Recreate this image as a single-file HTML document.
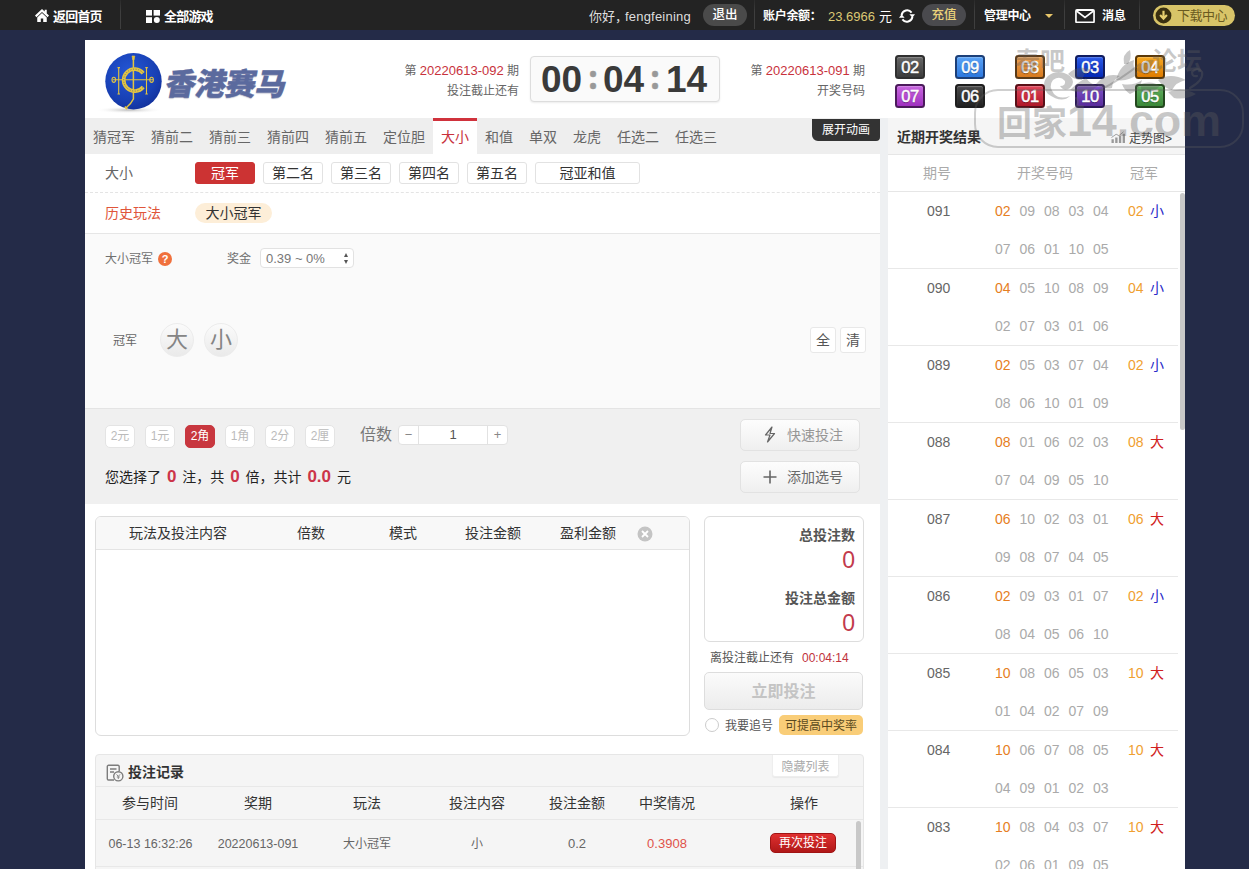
<!DOCTYPE html>
<html lang="zh-CN">
<head>
<meta charset="utf-8">
<title>香港赛马</title>
<style>
*{box-sizing:border-box;margin:0;padding:0}
html,body{width:1249px;height:869px;overflow:hidden}
body{background:#242b48;font-family:"Liberation Sans","Noto Sans CJK SC",sans-serif;font-size:12px;color:#666;position:relative}
.abs{position:absolute}
#topbar{position:absolute;left:0;top:0;width:1249px;height:29.5px;background:#232323;color:#fff;font-size:13px}
#topbar .t{position:absolute;top:1px;height:30px;line-height:31px;white-space:nowrap}
#topbar .sep{position:absolute;top:0;width:1px;height:29px;background:linear-gradient(#2a2a2a,#3e3e3e 40%,#3e3e3e)}
#wrap{position:absolute;left:85px;top:40px;width:1100px;height:829px;background:#fff}
/* header */
.hd-r{position:absolute;text-align:right;white-space:nowrap;font-size:12px;color:#666;line-height:20px}
.hd-r b{font-weight:normal;color:#c8323c}
#timer{position:absolute;left:445px;top:16px;width:190px;height:46px;border:1px solid #ddd;border-radius:4px;background:#fafafa;box-shadow:0 1px 2px rgba(0,0,0,.08)}
#timer span{position:absolute;top:1px;line-height:44px;font-size:37px;font-weight:bold;color:#3a3a3a;letter-spacing:0}
#timer i{position:absolute;font-family:'Noto Sans CJK SC',sans-serif;font-style:normal;top:-3px;line-height:44px;font-size:31px;-webkit-text-stroke:0.5px #999;font-weight:bold;color:#999}
.ball{position:absolute;width:30px;height:24px;border-radius:3.5px;border:2px solid #1c1c1c;color:#fff;font-size:16.5px;line-height:21.5px;box-shadow:inset 0 1px 1px rgba(255,255,255,.25);-webkit-text-stroke:0.45px #fff;text-align:center;letter-spacing:-0.5px;text-shadow:0 1px 1px rgba(0,0,0,.4)}
/* tabs */
#tabs{position:absolute;left:0;top:78px;width:795px;height:36px;background:#eee}
#tabs a{position:absolute;top:0;height:36px;line-height:39px;font-size:14px;color:#666;padding:0 8px;white-space:nowrap}
#tabs a.on{background:#fff;color:#c8323c;border-top:3px solid #d0323c;line-height:33px}
#anim{position:absolute;left:727px;top:79px;width:68px;height:22px;background:#333;color:#fff;font-size:12px;line-height:23px;text-align:center;border-radius:0 0 4px 6px}
/* left */
#left{position:absolute;left:0;top:114px;width:795px;height:715px;background:#fff}
.sbtn{position:absolute;top:8px;height:22px;width:60px;border:1px solid #e2e2e2;border-radius:3px;font-size:14px;line-height:20px;text-align:center;color:#333;background:#fff}
.sbtn.on{background:#cc3333;border-color:#cc3333;color:#fff}
.unit{position:absolute;top:270.5px;width:30px;height:23px;border:1px solid #e4e4e4;border-radius:5px;background:#fff;color:#bbb;font-size:12px;line-height:21px;text-align:center}
.unit.on{background:#c8373f;border-color:#c8373f;color:#fff}
.bigbtn{position:absolute;left:655px;width:120px;height:32px;border:1px solid #e2e2e2;border-radius:5px;background:linear-gradient(#fdfdfd,#efefef);font-size:14px;color:#969696;line-height:30px}
.rn{color:#cc3549;font-size:17px;margin:0 2px}
.th{transform:translateX(-50%);white-space:nowrap}
/* right */
#gap{position:absolute;left:795px;top:78px;width:8px;height:751px;background:#eef0f2}
#right{position:absolute;left:803px;top:78px;width:297px;height:751px;background:#fff;overflow:hidden}
.rrow{position:absolute;left:0;width:290px;height:77px;border-bottom:1px solid #e8e8e8;font-size:14px;color:#aaa}
.rrow span{position:absolute;line-height:20px;white-space:nowrap}
.rrow .p{left:39px;top:8.5px;color:#666}
.rrow .n{top:8.5px}
.rrow .n2{top:46.5px}
.o{color:#e67e22}.y{color:#f0a030}.bl{color:#2828c8}.rd{color:#d02020}
</style>
</head>
<body>
<div id="topbar">
  <svg class="abs" style="left:35px;top:9px" width="14" height="13" viewBox="0 0 15 13" preserveAspectRatio="none"><path d="M7.5 0 L0 6.5 L1.5 8.2 L7.5 3 L13.5 8.2 L15 6.5 L12.6 4.4 V0.8 H10.4 V2.5 Z" fill="#fff"/><path d="M7.5 4 L2.4 8.4 V13 H6.2 V9.4 H8.8 V13 H12.6 V8.4 Z" fill="#fff"/></svg>
  <span class="t" style="left:53px;font-weight:bold;letter-spacing:-0.8px">返回首页</span>
  <div class="sep" style="left:120px"></div>
  <svg class="abs" style="left:146px;top:10px" width="14" height="13" viewBox="0 0 14 13"><rect x="0" y="0" width="6" height="5.6" fill="#fff"/><rect x="7.6" y="0" width="6.4" height="5.6" fill="#fff"/><rect x="0" y="7.2" width="6" height="5.8" fill="#fff"/><circle cx="10.8" cy="10" r="3" fill="#fff"/></svg>
  <span class="t" style="left:164px;font-weight:bold;letter-spacing:-0.8px">全部游戏</span>
  <span class="t" style="left:589px;color:#ddd">你好，<span style="margin-left:-3px;letter-spacing:.2px">fengfeining</span></span>
  <span class="abs" style="left:703px;top:4px;width:44px;height:22px;border-radius:11px;background:#4a4a4a;color:#fff;font-size:12.5px;font-weight:500;line-height:23px;text-align:center">退出</span>
  <div class="sep" style="left:754px"></div>
  <span class="t" style="left:763px;font-weight:bold;font-size:12px;letter-spacing:-0.3px">账户余额：</span>
  <span class="t" style="left:828px;color:#dcc874">23.6966</span>
  <span class="t" style="left:879px">元</span>
  <svg class="abs" style="left:899px;top:8px" width="16" height="16" viewBox="0 0 16 16"><path d="M2.6 7.2 A5.6 5.6 0 0 1 12.6 4.6" fill="none" stroke="#fff" stroke-width="2"/><path d="M13.4 8.8 A5.6 5.6 0 0 1 3.4 11.4" fill="none" stroke="#fff" stroke-width="2"/><path d="M10.4 6.2 H16 L13.4 9.8 Z" fill="#fff"/><path d="M5.6 9.8 H0 L2.6 6.2 Z" fill="#fff"/></svg>
  <span class="abs" style="left:922px;top:4px;width:44px;height:22px;border-radius:11px;background:#4a4a4e;color:#ead27a;font-size:12.5px;font-weight:500;line-height:23px;text-align:center">充值</span>
  <div class="sep" style="left:974px"></div>
  <span class="t" style="left:984px;font-weight:bold;font-size:12px;letter-spacing:-0.3px">管理中心</span>
  <span class="abs" style="left:1045px;top:14px;width:0;height:0;border:4px solid transparent;border-top:4px solid #e8c66a"></span>
  <div class="sep" style="left:1064px"></div>
  <svg class="abs" style="left:1075px;top:8.5px" width="20" height="14.5" viewBox="0 0 19 13" preserveAspectRatio="none"><rect x="0.9" y="0.9" width="17.2" height="11.2" rx="1" fill="none" stroke="#fff" stroke-width="1.6"/><path d="M1.5 1.8 L9.5 7.6 L17.5 1.8" fill="none" stroke="#fff" stroke-width="1.5"/></svg>
  <span class="t" style="left:1102px;font-weight:bold;font-size:12px">消息</span>
  <div class="sep" style="left:1139px"></div>
  <span class="abs" style="left:1153px;top:4.5px;width:82px;height:21px;border-radius:11px;background:#d8c468;color:#6a5a20;font-size:13px;line-height:21px;padding-left:24px;letter-spacing:-0.5px">下载中心</span>
  <svg class="abs" style="left:1155px;top:6.5px" width="17" height="17" viewBox="0 0 14 14"><circle cx="7" cy="7" r="6.5" fill="#3a3010"/><path d="M7 3 V9 M4.2 6.6 L7 9.6 L9.8 6.6" fill="none" stroke="#e8d070" stroke-width="1.8"/></svg>
</div>
<div id="wrap">
  <div id="hd">
  <svg class="abs" style="left:8px;top:8.5px" width="80" height="68" viewBox="0 0 80 68">
    <defs><radialGradient id="lg" cx="42%" cy="35%" r="70%"><stop offset="0" stop-color="#2457d6"/><stop offset="0.7" stop-color="#1840b4"/><stop offset="1" stop-color="#12309a"/></radialGradient>
    <radialGradient id="sh" cx="50%" cy="50%" r="50%"><stop offset="0" stop-color="#bbb"/><stop offset="1" stop-color="#fff" stop-opacity="0"/></radialGradient></defs>
    <ellipse cx="36" cy="61" rx="34" ry="3.5" fill="url(#sh)"/>
    <circle cx="40.5" cy="32.2" r="28.2" fill="url(#lg)"/>
    <g fill="none" stroke="#e3c441" stroke-width="1.1">
      <path d="M40.4 9 V50 Q38 55 33 59" stroke-width="1.5"/>
      <path d="M19.6 30.8 H60"/>
      <path d="M50.2 24.2 A11 11 0 1 0 50.2 38" stroke-width="3.8"/>
      <path d="M25.7 18.6 V45 M53.5 18.6 V45 M24.5 18.6 H27 M52.3 18.6 H54.8 M24.5 45 H27 M52.3 45 H54.8"/>
      <ellipse cx="20.8" cy="30.8" rx="1.8" ry="2.6"/><ellipse cx="58.6" cy="30.8" rx="1.8" ry="2.6"/>
      <path d="M39 7 H41.8 L41 11 H39.8 Z" fill="#e3c441" stroke-width="0.6"/>
      <path d="M31.8 57.6 L34.2 60" stroke-width="1.8"/>
    </g>
    <path d="M50.2 24.2 A11 11 0 1 0 50.2 38" fill="none" stroke="#1a3fae" stroke-width="0.6" stroke-dasharray="1 1.6"/>
  </svg>
  <span class="abs" style="left:80.5px;top:23.5px;font-size:30.5px;line-height:40px;font-weight:900;color:#5b6a9e;letter-spacing:-0.4px;-webkit-text-stroke:0.4px #5b6a9e;white-space:nowrap;transform:skewX(-11deg);text-shadow:0 1px 1px rgba(60,70,110,.35)">香港赛马</span>
  <div class="hd-r" style="right:666px;top:21px">第 <b style="font-size:13px">20220613-092</b> 期</div>
  <div class="hd-r" style="right:666px;top:41px">投注截止还有</div>
  <div id="timer"><span style="left:10px">00</span><i style="left:57px">:</i><span style="left:72px">04</span><i style="left:119px">:</i><span style="left:135px">14</span></div>
  <div class="hd-r" style="right:320px;top:21px">第 <b style="font-size:13px">20220613-091</b> 期</div>
  <div class="hd-r" style="right:320px;top:41px">开奖号码</div>
  <span class="ball" style="left:810px;top:15px;background:linear-gradient(#666,#3c3c3c);border-color:#303030">02</span><span class="ball" style="left:870px;top:15px;background:linear-gradient(#5aa2f5,#2c78e0);border-color:#1c3f78">09</span><span class="ball" style="left:930px;top:15px;background:linear-gradient(#eda050,#d87a1e);border-color:#5a3a18">08</span><span class="ball" style="left:990px;top:15px;background:linear-gradient(#2a5ae8,#0328b8);border-color:#101c60">03</span><span class="ball" style="left:1050px;top:15px;background:linear-gradient(#f5a820,#e07c00);border-color:#5a3808">04</span><span class="ball" style="left:810px;top:44px;background:linear-gradient(#c866e0,#a030c0);border-color:#4c1a5c">07</span><span class="ball" style="left:870px;top:44px;background:linear-gradient(#4a4a4a,#222);border-color:#1e1e1e">06</span><span class="ball" style="left:930px;top:44px;background:linear-gradient(#e0455a,#b01828);border-color:#5a1018">01</span><span class="ball" style="left:990px;top:44px;background:linear-gradient(#7c50c8,#5a2c9c);border-color:#2c1a58">10</span><span class="ball" style="left:1050px;top:44px;background:linear-gradient(#62b060,#3a8838);border-color:#24481f">05</span>
</div>
  <div id="tabs"><a style="left:0px">猜冠军</a><a style="left:58px">猜前二</a><a style="left:116px">猜前三</a><a style="left:174px">猜前四</a><a style="left:232px">猜前五</a><a style="left:290px">定位胆</a><a style="left:348px" class="on">大小</a><a style="left:392px">和值</a><a style="left:436px">单双</a><a style="left:480px">龙虎</a><a style="left:524px">任选二</a><a style="left:582px">任选三</a></div>
  <div id="anim">展开动画</div>
  <div id="left">
    <span class="abs" style="left:20px;top:9px;font-size:14px;line-height:20px;color:#666">大小</span>
    <span class="sbtn on" style="left:110px">冠军</span><span class="sbtn" style="left:178px">第二名</span><span class="sbtn" style="left:246px">第三名</span><span class="sbtn" style="left:314px">第四名</span><span class="sbtn" style="left:382px">第五名</span><span class="sbtn" style="left:450px;width:105px">冠亚和值</span>
    <div class="abs" style="left:0;top:38px;width:795px;height:0;border-top:1px dashed #e4e4e4"></div>
    <span class="abs" style="left:20px;top:49px;font-size:14px;line-height:20px;color:#e0553a">历史玩法</span>
    <span class="abs" style="left:110px;top:49px;width:77px;height:20px;border-radius:10px;background:#fdeed8;font-size:14px;line-height:20px;color:#333;text-align:center">大小冠军</span>
    <div class="abs" style="left:0;top:79px;width:795px;height:175px;background:#fafafa;border-top:1px solid #e6e6e6"></div>
    <span class="abs" style="left:20px;top:96px;line-height:18px;color:#707070">大小冠军</span>
    <span class="abs" style="left:73px;top:98px;width:14px;height:14px;border-radius:7px;background:#f0703c;color:#fff;font-size:11px;font-weight:bold;line-height:14px;text-align:center">?</span>
    <span class="abs" style="left:142px;top:96px;line-height:18px;color:#707070">奖金</span>
    <div class="abs" style="left:175px;top:94px;width:94px;height:20px;border:1px solid #e2e2e2;border-radius:4px;background:#fff;font-size:13px;line-height:20px;color:#777;padding-left:5px">0.39 ~ 0%<span class="abs" style="right:5px;top:4px;width:0;height:0;border:2.5px solid transparent;border-bottom:4px solid #555;border-top:0"></span><span class="abs" style="right:5px;top:10.5px;width:0;height:0;border:2.5px solid transparent;border-top:4px solid #555;border-bottom:0"></span></div>
    <span class="abs" style="left:28px;top:178px;line-height:18px;color:#666">冠军</span>
    <span class="abs" style="left:75px;top:169px;width:34px;height:34px;border-radius:17px;background:linear-gradient(#fbfbfb,#eaeaea);border:1px solid #ececec;font-size:22px;line-height:32px;color:#858585;text-align:center">大</span>
    <span class="abs" style="left:119px;top:169px;width:34px;height:34px;border-radius:17px;background:linear-gradient(#fbfbfb,#eaeaea);border:1px solid #ececec;font-size:22px;line-height:32px;color:#858585;text-align:center">小</span>
    <span class="abs" style="left:725px;top:173px;width:26px;height:26px;border:1px solid #e8e8e8;border-radius:3px;background:#fff;font-size:14px;line-height:24px;color:#555;text-align:center">全</span>
    <span class="abs" style="left:755px;top:173px;width:26px;height:26px;border:1px solid #e8e8e8;border-radius:3px;background:#fff;font-size:14px;line-height:24px;color:#555;text-align:center">清</span>
    <div class="abs" style="left:0;top:254px;width:795px;height:96px;background:#f0f0f0;border-top:1px solid #e4e4e4"></div>
    <span class="unit" style="left:20px">2元</span><span class="unit" style="left:60px">1元</span><span class="unit on" style="left:100px">2角</span><span class="unit" style="left:140px">1角</span><span class="unit" style="left:180px">2分</span><span class="unit" style="left:220px">2厘</span>
    <span class="abs" style="left:275px;top:270px;font-size:16px;line-height:22px;color:#777">倍数</span>
    <div class="abs" style="left:313px;top:271px;width:110px;height:20px;border:1px solid #e2e2e2;border-radius:4px;background:#fff;font-size:13px;line-height:18px;color:#555;text-align:center">1<span class="abs" style="left:0;top:0;width:20px;height:18px;border-right:1px solid #e2e2e2;color:#888">−</span><span class="abs" style="right:0;top:0;width:20px;height:18px;border-left:1px solid #e2e2e2;color:#888">+</span></div>
    <div class="bigbtn" style="top:265px"><svg class="abs" style="left:22px;top:6px" width="14" height="17" viewBox="0 0 14 17"><path d="M9 1 L2.5 9 H7 L4.5 16 L11.5 7.5 H7 Z" fill="none" stroke="#666" stroke-width="1.2" stroke-linejoin="round"/></svg><span class="abs" style="left:46px;top:0">快速投注</span></div>
    <div class="bigbtn" style="top:307px"><svg class="abs" style="left:22px;top:8px" width="14" height="14" viewBox="0 0 14 14"><path d="M7 0.5 V13.5 M0.5 7 H13.5" stroke="#666" stroke-width="1.6"/></svg><span class="abs" style="left:46px;top:0;color:#6a6a6a">添加选号</span></div>
    <div class="abs" style="left:20px;top:312px;font-size:14px;line-height:22px;color:#222;white-space:nowrap">您选择了 <b class="rn">0</b> 注，共 <b class="rn">0</b> 倍，共计 <b class="rn">0.0</b> 元</div>
    <div class="abs" style="left:10px;top:362px;width:595px;height:220px;border:1px solid #ddd;border-radius:6px;background:#fff;overflow:hidden">
      <div class="abs" style="left:0;top:0;width:593px;height:33px;background:#f8f8f8;border-bottom:1px solid #e4e4e4;font-size:14px;color:#333;line-height:32px">
        <span class="abs" style="left:33px">玩法及投注内容</span><span class="abs" style="left:201px">倍数</span><span class="abs" style="left:293px">模式</span><span class="abs" style="left:369px">投注金额</span><span class="abs" style="left:464px">盈利金额</span>
        <svg class="abs" style="left:541px;top:9px" width="16" height="16" viewBox="0 0 16 16"><circle cx="8" cy="8" r="7.5" fill="#c4c4c4"/><path d="M5 5 L11 11 M11 5 L5 11" stroke="#fff" stroke-width="1.8"/></svg>
      </div>
    </div>
    <div class="abs" style="left:619px;top:362px;width:160px;height:126px;border:1px solid #ddd;border-radius:6px;background:#fff">
      <span class="abs" style="right:8px;top:8px;font-size:14px;font-weight:bold;color:#555;line-height:20px">总投注数</span>
      <span class="abs" style="right:8px;top:29px;font-size:23px;color:#c23a4c;line-height:28px">0</span>
      <span class="abs" style="right:8px;top:70.5px;font-size:14px;font-weight:bold;color:#555;line-height:20px">投注总金额</span>
      <span class="abs" style="right:8px;top:91.5px;font-size:23px;color:#c23a4c;line-height:28px">0</span>
    </div>
    <span class="abs" style="left:625px;top:495px;line-height:18px;color:#555;white-space:nowrap">离投注截止还有</span>
    <span class="abs" style="left:717px;top:495px;line-height:18px;color:#c0323c;white-space:nowrap">00:04:14</span>
    <div class="abs" style="left:619px;top:518px;width:159px;height:38px;border:1px solid #ddd;border-radius:5px;background:linear-gradient(#fbfbfb,#ececec);font-size:16px;font-weight:bold;color:#c4c4c4;line-height:38px;text-align:center">立即投注</div>
    <span class="abs" style="left:620px;top:564px;width:14px;height:14px;border:1px solid #ccc;border-radius:7px;background:#fff"></span>
    <span class="abs" style="left:640px;top:563px;line-height:18px;color:#555;white-space:nowrap">我要追号</span>
    <span class="abs" style="left:694px;top:561px;width:84px;height:20px;padding-top:0.5px;border-radius:5px;background:#f9cd78;color:#5a4a20;line-height:20px;text-align:center;white-space:nowrap">可提高中奖率</span>
    <div class="abs" style="left:10px;top:600px;width:769px;height:130px;border:1px solid #e6e6e6;border-radius:4px 4px 0 0;background:#f5f5f5">
      <svg class="abs" style="left:10px;top:9px" width="18" height="18" viewBox="0 0 18 18"><path d="M8 16 H2.5 A1.2 1.2 0 0 1 1.3 14.8 V2.5 A1.2 1.2 0 0 1 2.5 1.3 H12 A1.2 1.2 0 0 1 13.2 2.5 V7.5" fill="none" stroke="#7c7c7c" stroke-width="1.4"/><path d="M4 5 H10.5 M4 8 H8" stroke="#7c7c7c" stroke-width="1.3"/><circle cx="12.3" cy="12.3" r="4.6" fill="#f5f5f5" stroke="#7c7c7c" stroke-width="1.4"/><path d="M10.6 10.4 L12.3 12.4 L14 10.4 M12.3 12.4 V15 M10.8 13 H13.8" fill="none" stroke="#888" stroke-width="1"/></svg>
      <span class="abs" style="left:32px;top:7px;font-size:14px;font-weight:bold;color:#333;line-height:20px">投注记录</span>
      <span class="abs" style="left:676px;top:0px;width:67px;height:22px;background:#fff;border:1px solid #eee;border-top:0;border-radius:0 0 3px 3px;color:#aaa;line-height:24px;text-align:center;box-shadow:0 1px 1px rgba(0,0,0,.05)">隐藏列表</span>
      <div class="abs" style="left:0;top:31px;width:767px;height:34px;border-top:1px solid #e8e8e8;border-bottom:1px solid #e8e8e8;font-size:14px;color:#333;line-height:32px">
        <span class="abs th" style="left:54px">参与时间</span><span class="abs th" style="left:162px">奖期</span><span class="abs th" style="left:271px">玩法</span><span class="abs th" style="left:381px">投注内容</span><span class="abs th" style="left:481px">投注金额</span><span class="abs th" style="left:571px">中奖情况</span><span class="abs th" style="left:708px">操作</span>
      </div>
      <div class="abs" style="left:0;top:65px;width:767px;height:47px;border-bottom:1px solid #e8e8e8;font-size:12px;color:#666;line-height:48px">
        <span class="abs th" style="left:54.5px;font-size:12.5px">06-13 16:32:26</span><span class="abs th" style="left:162px;font-size:12.5px">20220613-091</span><span class="abs th" style="left:271px">大小冠军</span><span class="abs th" style="left:381px">小</span><span class="abs th" style="left:481px;font-size:13px">0.2</span><span class="abs th" style="left:571px;color:#e0524a;font-size:13px">0.3908</span>
        <span class="abs" style="left:674px;top:13px;width:66px;height:20px;border-radius:5px;background:linear-gradient(#e03030,#b01818);border:1px solid #a01414;color:#fff;font-size:12px;line-height:18px;text-align:center">再次投注</span>
      </div>
      <div class="abs" style="left:760px;top:66px;width:5px;height:64px;background:#c8c8c8;border-radius:3px 3px 0 0"></div>
    </div>
  </div>
  <div id="gap"></div>
  <div id="right">
    <div class="abs" style="left:0;top:0;width:297px;height:37px;background:#f5f5f5;border-bottom:1px solid #e6e6e6"></div>
    <span class="abs" style="left:9px;top:9px;font-size:14px;font-weight:bold;color:#333;line-height:20px;white-space:nowrap">近期开奖结果</span>
    <svg class="abs" style="left:222px;top:13px" width="16" height="13" viewBox="0 0 16 14"><path d="M1 13 V9 H3.5 V13 M5 13 V7 H7.5 V13 M9 13 V5 H11.5 V13 M13 13 V3 H15.5 V13" fill="#999"/><path d="M1 7 L6 3.5 L9 5 L14 0.8" fill="none" stroke="#999" stroke-width="1"/></svg>
    <span class="abs" style="left:241px;top:11px;font-size:12px;color:#444;line-height:20px;white-space:nowrap">走势图&gt;</span>
    <div class="abs" style="left:0;top:37px;width:297px;height:37px;border-bottom:1px solid #e6e6e6;font-size:14px;color:#aaa;line-height:37px">
      <span class="abs th" style="left:49px">期号</span><span class="abs th" style="left:157px">开奖号码</span><span class="abs th" style="left:256px">冠军</span>
    </div>
    <div class="rrow" style="top:74px"><span class="p">091</span><span class="n o" style="left:107.0px">02</span><span class="n" style="left:131.5px">09</span><span class="n" style="left:156.0px">08</span><span class="n" style="left:180.5px">03</span><span class="n" style="left:205.0px">04</span><span class="n2" style="left:107.0px">07</span><span class="n2" style="left:131.5px">06</span><span class="n2" style="left:156.0px">01</span><span class="n2" style="left:180.5px">10</span><span class="n2" style="left:205.0px">05</span><span class="n y" style="left:240px">02</span><span class="n bl" style="left:262px">小</span></div>
    <div class="rrow" style="top:151px"><span class="p">090</span><span class="n o" style="left:107.0px">04</span><span class="n" style="left:131.5px">05</span><span class="n" style="left:156.0px">10</span><span class="n" style="left:180.5px">08</span><span class="n" style="left:205.0px">09</span><span class="n2" style="left:107.0px">02</span><span class="n2" style="left:131.5px">07</span><span class="n2" style="left:156.0px">03</span><span class="n2" style="left:180.5px">01</span><span class="n2" style="left:205.0px">06</span><span class="n y" style="left:240px">04</span><span class="n bl" style="left:262px">小</span></div>
    <div class="rrow" style="top:228px"><span class="p">089</span><span class="n o" style="left:107.0px">02</span><span class="n" style="left:131.5px">05</span><span class="n" style="left:156.0px">03</span><span class="n" style="left:180.5px">07</span><span class="n" style="left:205.0px">04</span><span class="n2" style="left:107.0px">08</span><span class="n2" style="left:131.5px">06</span><span class="n2" style="left:156.0px">10</span><span class="n2" style="left:180.5px">01</span><span class="n2" style="left:205.0px">09</span><span class="n y" style="left:240px">02</span><span class="n bl" style="left:262px">小</span></div>
    <div class="rrow" style="top:305px"><span class="p">088</span><span class="n o" style="left:107.0px">08</span><span class="n" style="left:131.5px">01</span><span class="n" style="left:156.0px">06</span><span class="n" style="left:180.5px">02</span><span class="n" style="left:205.0px">03</span><span class="n2" style="left:107.0px">07</span><span class="n2" style="left:131.5px">04</span><span class="n2" style="left:156.0px">09</span><span class="n2" style="left:180.5px">05</span><span class="n2" style="left:205.0px">10</span><span class="n y" style="left:240px">08</span><span class="n rd" style="left:262px">大</span></div>
    <div class="rrow" style="top:382px"><span class="p">087</span><span class="n o" style="left:107.0px">06</span><span class="n" style="left:131.5px">10</span><span class="n" style="left:156.0px">02</span><span class="n" style="left:180.5px">03</span><span class="n" style="left:205.0px">01</span><span class="n2" style="left:107.0px">09</span><span class="n2" style="left:131.5px">08</span><span class="n2" style="left:156.0px">07</span><span class="n2" style="left:180.5px">04</span><span class="n2" style="left:205.0px">05</span><span class="n y" style="left:240px">06</span><span class="n rd" style="left:262px">大</span></div>
    <div class="rrow" style="top:459px"><span class="p">086</span><span class="n o" style="left:107.0px">02</span><span class="n" style="left:131.5px">09</span><span class="n" style="left:156.0px">03</span><span class="n" style="left:180.5px">01</span><span class="n" style="left:205.0px">07</span><span class="n2" style="left:107.0px">08</span><span class="n2" style="left:131.5px">04</span><span class="n2" style="left:156.0px">05</span><span class="n2" style="left:180.5px">06</span><span class="n2" style="left:205.0px">10</span><span class="n y" style="left:240px">02</span><span class="n bl" style="left:262px">小</span></div>
    <div class="rrow" style="top:536px"><span class="p">085</span><span class="n o" style="left:107.0px">10</span><span class="n" style="left:131.5px">08</span><span class="n" style="left:156.0px">06</span><span class="n" style="left:180.5px">05</span><span class="n" style="left:205.0px">03</span><span class="n2" style="left:107.0px">01</span><span class="n2" style="left:131.5px">04</span><span class="n2" style="left:156.0px">02</span><span class="n2" style="left:180.5px">07</span><span class="n2" style="left:205.0px">09</span><span class="n y" style="left:240px">10</span><span class="n rd" style="left:262px">大</span></div>
    <div class="rrow" style="top:613px"><span class="p">084</span><span class="n o" style="left:107.0px">10</span><span class="n" style="left:131.5px">06</span><span class="n" style="left:156.0px">07</span><span class="n" style="left:180.5px">08</span><span class="n" style="left:205.0px">05</span><span class="n2" style="left:107.0px">04</span><span class="n2" style="left:131.5px">09</span><span class="n2" style="left:156.0px">01</span><span class="n2" style="left:180.5px">02</span><span class="n2" style="left:205.0px">03</span><span class="n y" style="left:240px">10</span><span class="n rd" style="left:262px">大</span></div>
    <div class="rrow" style="top:690px"><span class="p">083</span><span class="n o" style="left:107.0px">10</span><span class="n" style="left:131.5px">08</span><span class="n" style="left:156.0px">04</span><span class="n" style="left:180.5px">03</span><span class="n" style="left:205.0px">07</span><span class="n2" style="left:107.0px">02</span><span class="n2" style="left:131.5px">06</span><span class="n2" style="left:156.0px">01</span><span class="n2" style="left:180.5px">09</span><span class="n2" style="left:205.0px">05</span><span class="n y" style="left:240px">10</span><span class="n rd" style="left:262px">大</span></div>
    <div class="abs" style="left:292px;top:75px;width:5px;height:237px;background:#c8c8c8;border-radius:3px"></div>
  </div>
</div>
<div id="wm" style="position:absolute;left:0;top:0;width:1249px;height:869px;pointer-events:none;z-index:50;color:rgba(95,95,95,.34);font-weight:bold;overflow:hidden">
  <div class="abs" style="left:974px;top:89px;width:270px;height:59px;border:2.5px solid rgba(95,95,95,.3);border-radius:24px"></div>
  <span class="abs" id="wmt" style="left:997px;top:93px;font-size:45px;line-height:56px;white-space:nowrap;letter-spacing:-0.2px"><span style="font-size:35px;letter-spacing:0">回家</span>14.com</span>
  <span class="abs" style="left:1015px;top:45px;font-size:25px;line-height:32px;white-space:nowrap">春吧</span>
  <span class="abs" style="left:1152px;top:45px;font-size:25px;line-height:32px;white-space:nowrap">论坛</span>
  <svg class="abs" style="left:1040px;top:50px" width="170" height="56" viewBox="0 0 170 56"><g fill="rgba(95,95,95,.34)" stroke="none">
    <path d="M8 44 Q0 34 8 26 Q18 18 30 26 Q36 32 30 38 Q24 42 20 36 Q26 36 25 31 Q20 25 13 30 Q8 36 14 44 Q20 50 30 46 Q22 54 8 44 Z"/>
    <path d="M28 24 Q38 14 52 20 Q44 22 42 30 Q34 30 28 24 Z"/>
    <path d="M30 40 Q44 46 58 36 Q50 34 46 28 Q38 32 30 40 Z"/>
    <path d="M56 34 Q66 22 80 26 Q72 30 72 38 Q62 40 56 34 Z"/>
    <path d="M76 30 Q80 14 94 10 Q92 18 98 24 Q88 32 76 30 Z"/>
    <path d="M84 14 Q82 4 90 0 Q92 8 88 14 Z"/>
    <path d="M96 20 Q104 8 114 10 Q110 16 112 22 Q104 26 96 20 Z"/>
    <path d="M82 34 Q94 36 102 30 Q100 40 90 44 Q84 40 82 34 Z"/>
    <path d="M100 34 Q112 30 120 36 Q112 44 102 42 Z"/>
    <path d="M118 30 Q130 22 146 30 Q136 32 132 40 Q124 38 118 30 Z"/>
    <path d="M128 42 Q142 36 156 44 Q146 50 134 48 Z"/>
  </g>
  <g fill="none" stroke="rgba(95,95,95,.34)" stroke-width="2.2" stroke-linecap="round"><path d="M60 40 Q80 30 100 14"/><path d="M150 38 Q164 30 162 22 Q158 16 152 22 Q152 27 157 26"/><path d="M36 48 Q40 52 36 56"/></g></svg>
</div>
</body>
</html>
